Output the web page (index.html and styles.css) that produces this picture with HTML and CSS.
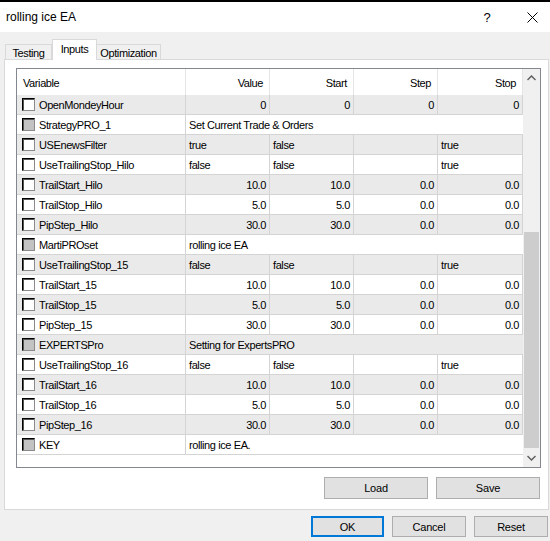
FILE: index.html
```html
<!DOCTYPE html>
<html lang="en">
<head>
    <meta charset="UTF-8">
    <meta name="viewport" content="width=device-width, initial-scale=1.0">
    <link rel="stylesheet" href="styles.css">
    <title>rolling ice EA</title>
</head>
<body>
    <div class="titlebar">
        <div class="title">rolling ice EA</div>
        <div class="help">?</div>
        <svg class="close" width="11" height="11" viewBox="0 0 11 11">
            <path d="M0.5 0.5 L10.5 10.5 M10.5 0.5 L0.5 10.5" stroke="#000" stroke-width="1" fill="none"/>
        </svg>
    </div>

    <div class="main">
        <div class="tabs">
            <div class="tab tab-testing">Testing</div>
            <div class="tab tab-inputs active">Inputs</div>
            <div class="tab tab-opt">Optimization</div>
        </div>

        <div class="panel">
            <div class="grid">
                <div class="rows">
                    <div class="head">
                        <div class="hcell">Variable</div>
                        <div class="hcell num">Value</div>
                        <div class="hcell num">Start</div>
                        <div class="hcell num">Step</div>
                        <div class="hcell num">Stop</div>
                    </div>
                    <div class="list">
                        <div class="row">
                            <div class="cell var"><span class="box"></span>OpenMondeyHour</div>
                            <div class="cell num">0</div>
                            <div class="cell num">0</div>
                            <div class="cell num">0</div>
                            <div class="cell num">0</div>
                        </div>
                        <div class="row group">
                            <div class="cell var"><span class="box"></span>StrategyPRO_1</div>
                            <div class="cell span">Set Current Trade &amp; Orders</div>
                        </div>
                        <div class="row">
                            <div class="cell var"><span class="box"></span>USEnewsFilter</div>
                            <div class="cell">true</div>
                            <div class="cell">false</div>
                            <div class="cell"></div>
                            <div class="cell">true</div>
                        </div>
                        <div class="row">
                            <div class="cell var"><span class="box"></span>UseTrailingStop_Hilo</div>
                            <div class="cell">false</div>
                            <div class="cell">false</div>
                            <div class="cell"></div>
                            <div class="cell">true</div>
                        </div>
                        <div class="row">
                            <div class="cell var"><span class="box"></span>TrailStart_Hilo</div>
                            <div class="cell num">10.0</div>
                            <div class="cell num">10.0</div>
                            <div class="cell num">0.0</div>
                            <div class="cell num">0.0</div>
                        </div>
                        <div class="row">
                            <div class="cell var"><span class="box"></span>TrailStop_Hilo</div>
                            <div class="cell num">5.0</div>
                            <div class="cell num">5.0</div>
                            <div class="cell num">0.0</div>
                            <div class="cell num">0.0</div>
                        </div>
                        <div class="row">
                            <div class="cell var"><span class="box"></span>PipStep_Hilo</div>
                            <div class="cell num">30.0</div>
                            <div class="cell num">30.0</div>
                            <div class="cell num">0.0</div>
                            <div class="cell num">0.0</div>
                        </div>
                        <div class="row group">
                            <div class="cell var"><span class="box"></span>MartiPROset</div>
                            <div class="cell span">rolling ice EA</div>
                        </div>
                        <div class="row">
                            <div class="cell var"><span class="box"></span>UseTrailingStop_15</div>
                            <div class="cell">false</div>
                            <div class="cell">false</div>
                            <div class="cell"></div>
                            <div class="cell">true</div>
                        </div>
                        <div class="row">
                            <div class="cell var"><span class="box"></span>TrailStart_15</div>
                            <div class="cell num">10.0</div>
                            <div class="cell num">10.0</div>
                            <div class="cell num">0.0</div>
                            <div class="cell num">0.0</div>
                        </div>
                        <div class="row">
                            <div class="cell var"><span class="box"></span>TrailStop_15</div>
                            <div class="cell num">5.0</div>
                            <div class="cell num">5.0</div>
                            <div class="cell num">0.0</div>
                            <div class="cell num">0.0</div>
                        </div>
                        <div class="row">
                            <div class="cell var"><span class="box"></span>PipStep_15</div>
                            <div class="cell num">30.0</div>
                            <div class="cell num">30.0</div>
                            <div class="cell num">0.0</div>
                            <div class="cell num">0.0</div>
                        </div>
                        <div class="row group">
                            <div class="cell var"><span class="box"></span>EXPERTSPro</div>
                            <div class="cell span">Setting for ExpertsPRO</div>
                        </div>
                        <div class="row">
                            <div class="cell var"><span class="box"></span>UseTrailingStop_16</div>
                            <div class="cell">false</div>
                            <div class="cell">false</div>
                            <div class="cell"></div>
                            <div class="cell">true</div>
                        </div>
                        <div class="row">
                            <div class="cell var"><span class="box"></span>TrailStart_16</div>
                            <div class="cell num">10.0</div>
                            <div class="cell num">10.0</div>
                            <div class="cell num">0.0</div>
                            <div class="cell num">0.0</div>
                        </div>
                        <div class="row">
                            <div class="cell var"><span class="box"></span>TrailStop_16</div>
                            <div class="cell num">5.0</div>
                            <div class="cell num">5.0</div>
                            <div class="cell num">0.0</div>
                            <div class="cell num">0.0</div>
                        </div>
                        <div class="row">
                            <div class="cell var"><span class="box"></span>PipStep_16</div>
                            <div class="cell num">30.0</div>
                            <div class="cell num">30.0</div>
                            <div class="cell num">0.0</div>
                            <div class="cell num">0.0</div>
                        </div>
                        <div class="row group">
                            <div class="cell var"><span class="box"></span>KEY</div>
                            <div class="cell span">rolling ice EA.</div>
                        </div>
                    </div>
                </div>
                <div class="scroll">
                    <div class="arrow">
                        <svg width="9" height="6" viewBox="0 0 9 6"><path d="M0.5 5 L4.5 1 L8.5 5" stroke="#606060" stroke-width="1.5" fill="none"/></svg>
                    </div>
                    <div class="track"><div class="thumb"></div></div>
                    <div class="arrow">
                        <svg width="9" height="6" viewBox="0 0 9 6"><path d="M0.5 1 L4.5 5 L8.5 1" stroke="#606060" stroke-width="1.5" fill="none"/></svg>
                    </div>
                </div>
            </div>

            <div class="actions">
                <button class="btn wide">Load</button>
                <button class="btn wide">Save</button>
            </div>
        </div>

        <div class="footer">
            <button class="btn ok">OK</button>
            <button class="btn">Cancel</button>
            <button class="btn">Reset</button>
        </div>
    </div>
</body>
</html>
```

FILE: styles.css
```css
body {
    margin: 0;
    width: 550px;
    height: 541px;
    overflow: hidden;
    background: #f0f0f0;
    font-family: "Liberation Sans", Arial, sans-serif;
    font-size: 11px;
    letter-spacing: -0.4px;
    color: #000;
}

/* window title */
.titlebar {
    display: flex;
    align-items: center;
    height: 30px;
    border-top: 2px solid #000;
    background: #fff;
    padding-left: 6px;
    font-size: 12px;
    letter-spacing: 0;
}

.title {
    flex: 1;
}

.help {
    width: 10px;
    text-align: center;
    margin-right: 35px;
    font-size: 13px;
}

.close {
    margin-right: 12px;
}

.main {
    padding: 7px 1px 0 4px;
}

/* tabs */
.tabs {
    display: flex;
    align-items: flex-end;
    height: 20px;
    margin-left: 1px;
    position: relative;
    z-index: 1;
}

.tab {
    box-sizing: border-box;
    height: 15px;
    border: 1px solid #d9d9d9;
    border-bottom: 0;
    display: flex;
    align-items: center;
    justify-content: center;
    padding-top: 1px;
}

.tab-testing { width: 47px; }
.tab-inputs { width: 45px; }
.tab-opt { width: 65px; margin-left: -1px; }

.tab.active {
    height: 21px;
    margin-bottom: -1px;
    background: #fff;
    padding-top: 0;
    padding-bottom: 2px;
}

.panel {
    width: 545px;
    box-sizing: border-box;
    border: 1px solid #d9d9d9;
    background: #fff;
    padding: 8px 7px 10px 11px;
}

/* inputs grid */
.grid {
    display: flex;
    height: 400px;
    box-sizing: border-box;
    border: 1px solid #828790;
}

.rows {
    width: 506px;
}

.head,
.row {
    display: grid;
    grid-template-columns: 169px 84px 84px 84px 85px;
}

.head {
    height: 26px;
}

.hcell {
    box-sizing: border-box;
    border-right: 1px solid #e5e5e5;
    display: flex;
    align-items: center;
    padding: 2px 6px 0 6px;
}

.hcell.num {
    justify-content: flex-end;
}

.row {
    height: 20px;
    box-sizing: border-box;
    border-bottom: 1px solid #d4d4d4;
}

.list .row:nth-child(odd) {
    background: #eaeaea;
}

.cell {
    box-sizing: border-box;
    border-right: 1px solid #d4d4d4;
    display: flex;
    align-items: center;
    padding: 0 3px;
    white-space: nowrap;
    overflow: hidden;
}

.cell.num {
    justify-content: flex-end;
}

.cell.var {
    padding-left: 5px;
}

.cell.span {
    grid-column: span 4;
    border-right: 0;
}

.box {
    width: 13px;
    height: 13px;
    box-sizing: border-box;
    border: 1px solid;
    border-color: #000 #8a8a8a #8a8a8a #000;
    box-shadow: inset 1px 1px 0 #555;
    background: #fff;
    margin-right: 4px;
    flex: none;
}

.group .box {
    background: #c3c3c3;
}

/* scrollbar */
.scroll {
    width: 17px;
    background: #f0f0f0;
    display: flex;
    flex-direction: column;
}

.arrow {
    height: 18px;
    display: flex;
    align-items: center;
    justify-content: center;
}

.track {
    flex: 1;
}

.thumb {
    margin: 145px 1px 0 1px;
    height: 216px;
    background: #cdcdcd;
}

/* buttons */
.btn {
    box-sizing: border-box;
    height: 21px;
    width: 74px;
    border: 1px solid #adadad;
    background: #e1e1e1;
    font-family: inherit;
    font-size: 11px;
    letter-spacing: -0.2px;
    color: #000;
    padding: 0;
}

.btn.wide {
    width: 104px;
    height: 22px;
}

.btn.ok {
    width: 73px;
    border: 2px solid #0078d7;
}

.actions {
    display: flex;
    justify-content: flex-end;
    gap: 8px;
    margin-top: 9px;
    padding-right: 1px;
}

.footer {
    display: flex;
    justify-content: flex-end;
    gap: 8px;
    margin-top: 6px;
    padding-right: 1px;
}
```
